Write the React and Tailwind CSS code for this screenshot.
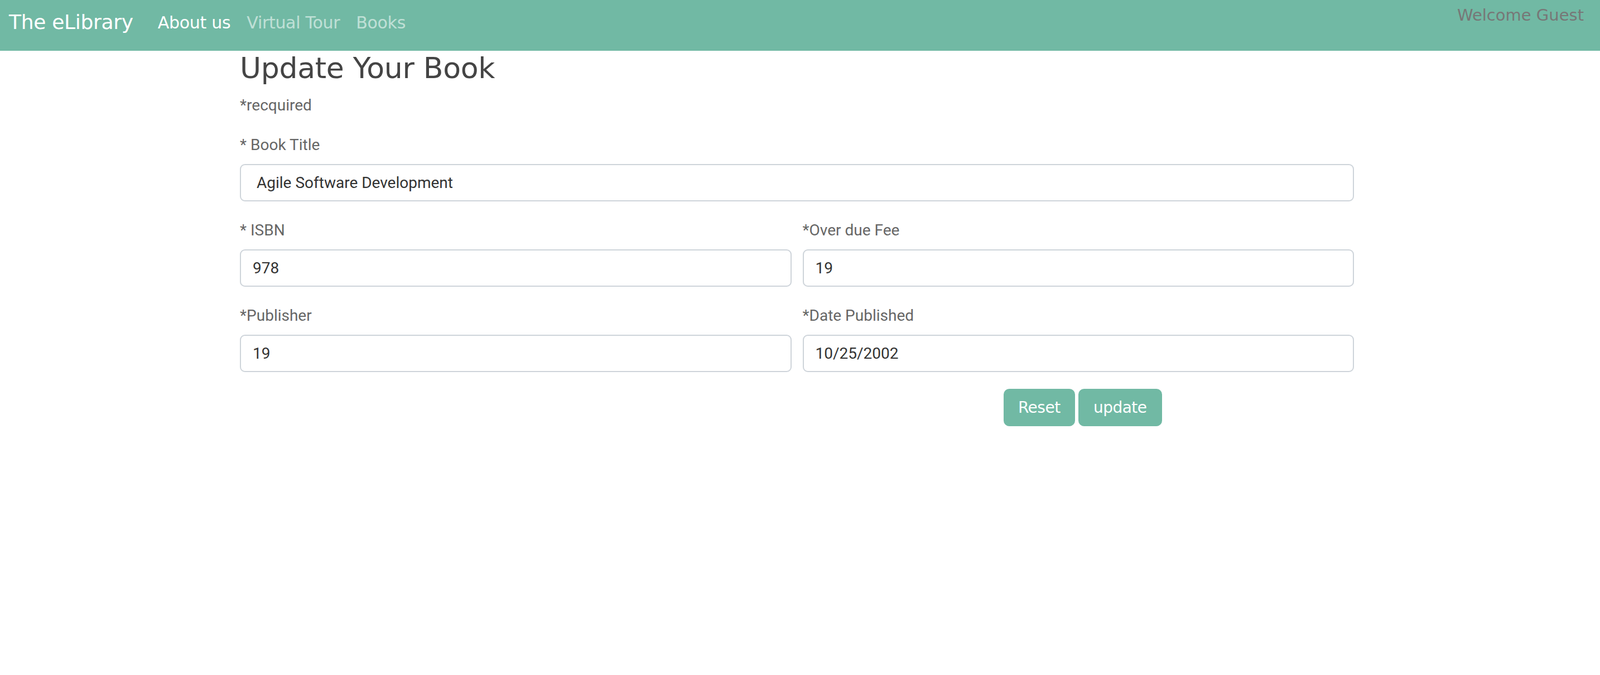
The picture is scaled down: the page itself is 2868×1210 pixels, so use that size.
import { useState } from 'react'

const fields = [
  [{ label: '* ISBN', value: '978' }, { label: '*Over due Fee', value: '19' }],
  [{ label: '*Publisher', value: '19' }, { label: '*Date Published', value: '10/25/2002' }],
]

export default function App() {
  const [title, setTitle] = useState('Agile Software Development')

  return (
    <div className="min-h-[1210px] bg-white">
      {/* Navbar */}
      <nav className="flex h-[91px] items-start justify-between bg-[#71b9a4] pl-4 pr-[29px] font-['DejaVu_Sans',sans-serif]">
        <div className="flex h-[80px] items-center">
          <a className="mr-[44px] text-[36px] tracking-[-0.3px] text-white">The eLibrary</a>
          <a className="mr-[29px] text-[30px] tracking-[-0.3px] text-white">About us</a>
          <a className="mr-[29px] text-[30px] tracking-[-0.3px] text-white/55">Virtual Tour</a>
          <a className="text-[30px] tracking-[-0.3px] text-white/55">Books</a>
        </div>
        <div className="pt-[6px] text-[29px] text-[#777]">Welcome Guest</div>
      </nav>

      {/* Form */}
      <div className="ml-[430px] w-[1997px] font-['Roboto',sans-serif]">
        <h2 className="mt-[2px] h-[58px] font-['DejaVu_Sans',sans-serif] text-[52px] leading-[58px] tracking-[-0.3px] text-[#444]">
          Update Your Book
        </h2>
        <p className="mt-[17px] h-[42px] text-[28px] leading-[42px] text-[#666]">*recquired</p>

        <div className="mt-[29px]">
          <label className="block h-[42px] text-[28px] leading-[42px] text-[#666]">* Book Title</label>
          <input
            className="mt-[13px] block h-[67px] w-full rounded-[9px] border-2 border-[#ced4da] px-[28px] text-[28px] text-[#333] outline-none"
            value={title}
            onChange={(e) => setTitle(e.target.value)}
          />
        </div>

        {fields.map((row, i) => (
          <div key={i} className="mt-[31px] grid grid-cols-2 gap-x-[20px]">
            {row.map((f) => (
              <div key={f.label}>
                <label className="block h-[42px] text-[28px] leading-[42px] text-[#666]">{f.label}</label>
                <input
                  className="mt-[13px] block h-[67px] w-full rounded-[9px] border-2 border-[#ced4da] px-[21px] text-[28px] text-[#333] outline-none"
                  defaultValue={f.value}
                />
              </div>
            ))}
          </div>
        ))}

        {/* Buttons sit centred under the right column */}
        <div className="mt-[30px] grid grid-cols-2 gap-x-[20px]">
          <div />
          <div className="flex justify-center gap-[6px] pl-[16px] font-['DejaVu_Sans',sans-serif]">
            <button className="h-[67px] w-[128px] rounded-[10px] bg-[#71b9a4] text-[28px] tracking-[-0.5px] text-white">Reset</button>
            <button className="h-[67px] w-[150px] rounded-[10px] bg-[#71b9a4] text-[28px] tracking-[-0.5px] text-white">update</button>
          </div>
        </div>
      </div>
    </div>
  )
}
